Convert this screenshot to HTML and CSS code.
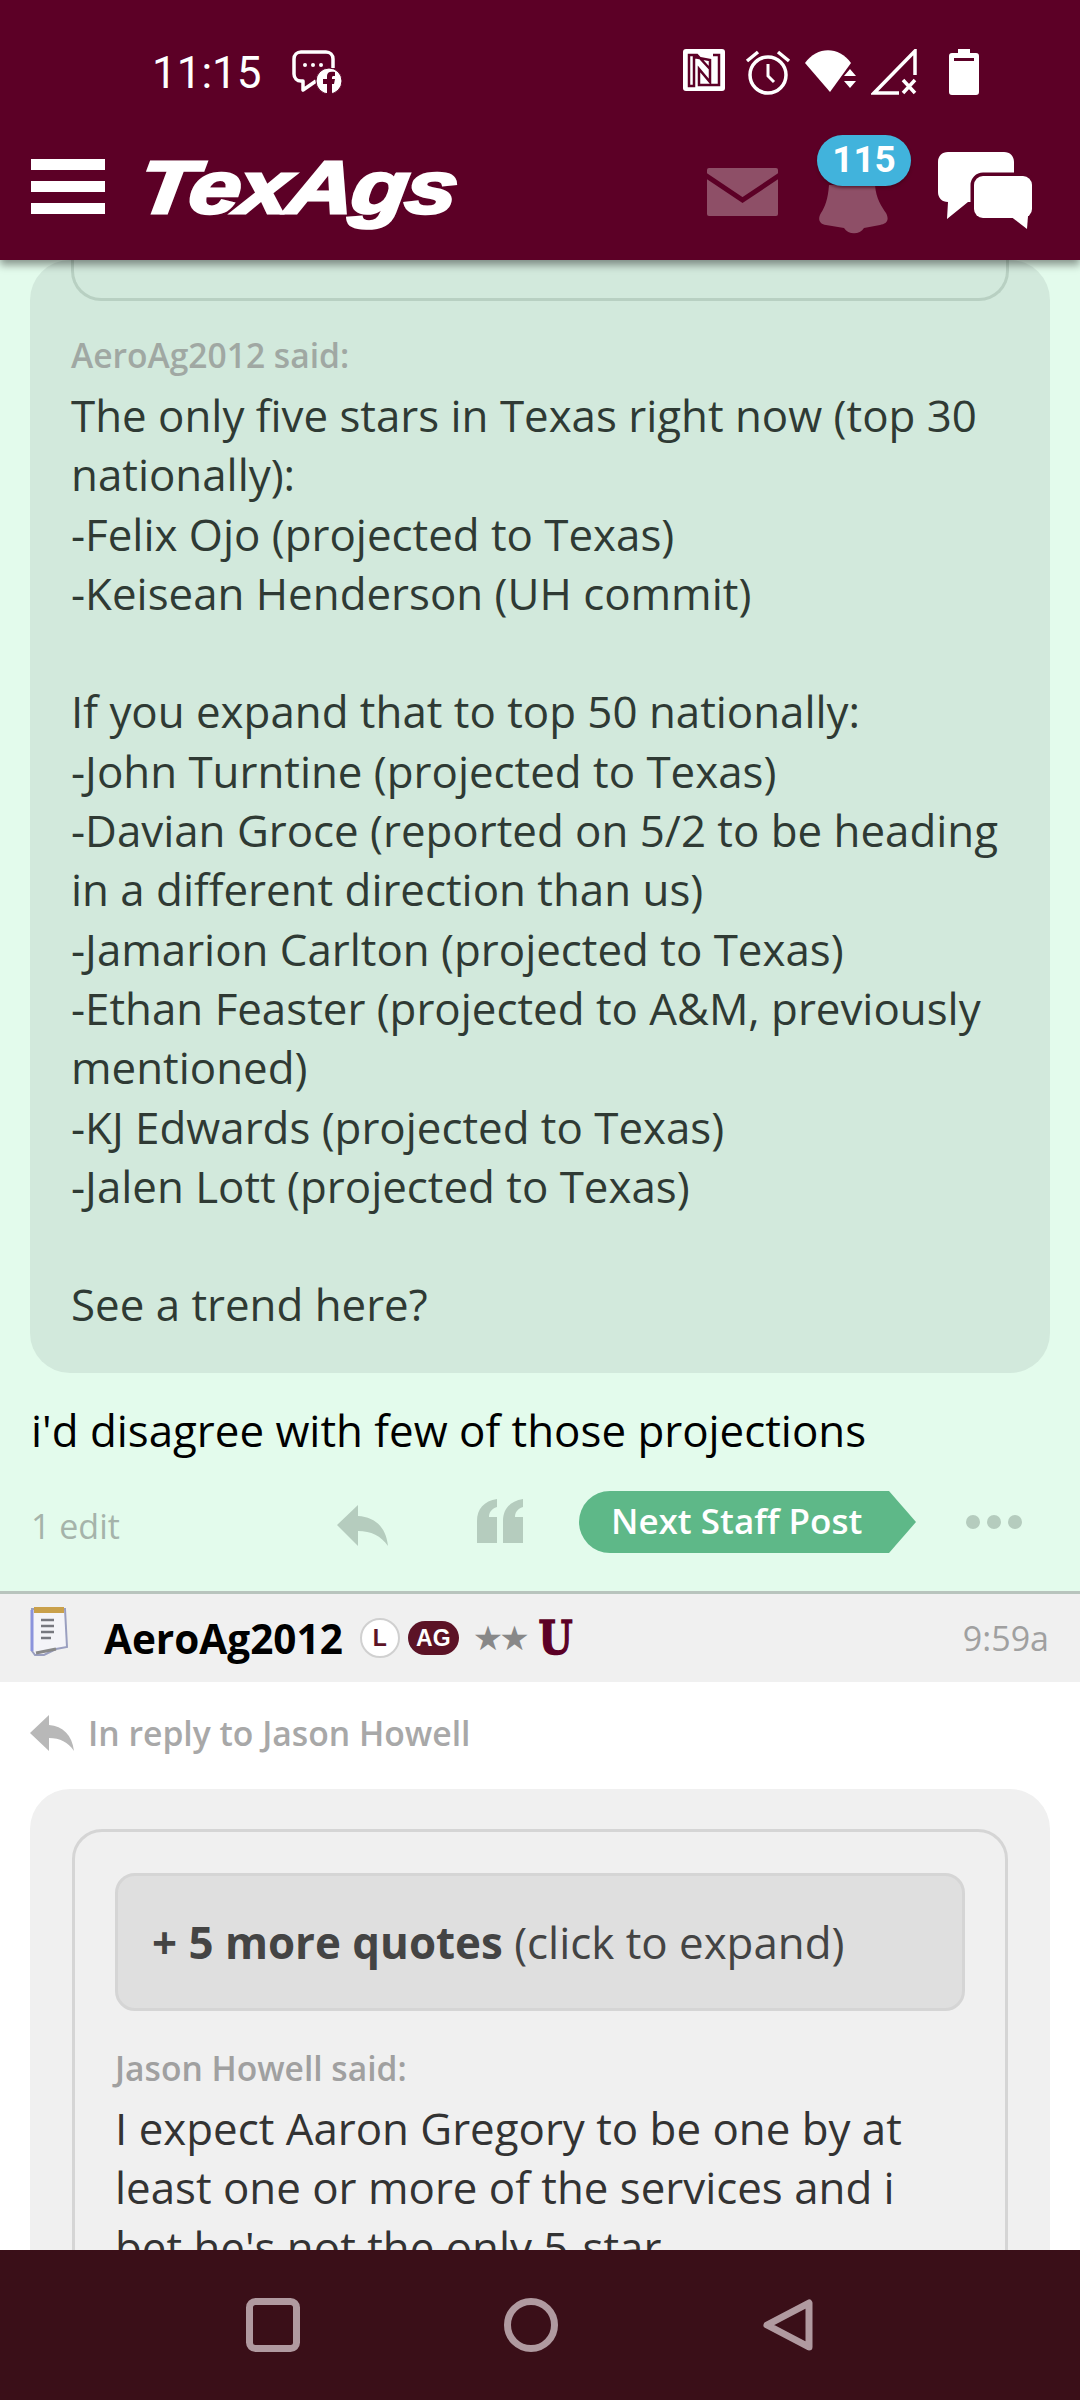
FILE: index.html
```html
<!DOCTYPE html>
<html lang="en">
<head>
  <meta charset="UTF-8">
  <meta name="viewport" content="width=device-width, initial-scale=1.0">
  <title>TexAgs</title>
  <link rel="stylesheet" href="styles.css">
</head>
<body>
  <div class="screen">
    <header class="topbar">
      <div class="status">
        <span class="clock">11:15</span>
        <svg class="msg-icon" viewBox="0 0 50 44" width="50" height="44">
          <path d="M24 31L11 40V31H9C5 31 2 28 2 24V9C2 5 5 2 9 2H34C38 2 41 5 41 9V18" fill="none" stroke="#fff" stroke-width="3.5" stroke-linejoin="round"/>
          <circle cx="13" cy="15" r="2" fill="#fff"/><circle cx="21" cy="15" r="2" fill="#fff"/><circle cx="29" cy="15" r="2" fill="#fff"/>
          <circle cx="37" cy="31" r="13" fill="#fff" stroke="#5c0026" stroke-width="1"/>
          <path d="M35 44V34H31V29H35V26C35 22 38 21 43 22V26C40 26 40 26 40 29H43L42 34H40V44Z" fill="#5c0026"/>
        </svg>
        <div class="status-right">
          <svg viewBox="0 0 42 42" width="42" height="42">
            <rect width="42" height="42" rx="3" fill="#fff"/>
            <path d="M30 6H36V36H16V20L27 33V11L11 8V37H6V6H14L27 20" fill="none" stroke="#5c0026" stroke-width="2.500"/>
          </svg>
          <svg class="alarm" viewBox="0 0 46 46" width="46" height="46">
            <circle cx="23" cy="26" r="18" fill="none" stroke="#fff" stroke-width="3.5"/>
            <path d="M23 15V27L29 33" fill="none" stroke="#fff" stroke-width="3"/>
            <path d="M2 12L13 3M44 12L33 3" stroke="#fff" stroke-width="3.5"/>
          </svg>
          <svg viewBox="0 0 52 44" width="52" height="44">
            <path d="M0 14C12 -3 34 -3 46 14L25 43Z" fill="#fff"/>
            <path d="M39 27L45 20L51 27ZM39 32L51 32L45 39Z" fill="#fff"/>
          </svg>
          <svg viewBox="0 0 46 46" width="46" height="46">
            <path d="M44 26V2L3 44H28" fill="none" stroke="#fff" stroke-width="3.5"/>
            <path d="M32 31L44 44M44 31L32 44" stroke="#fff" stroke-width="3.5"/>
          </svg>
          <svg class="batt" viewBox="0 0 30 46" width="30" height="46">
            <path d="M9 0H21V4H27C29 4 30 5 30 7V43C30 45 29 46 27 46H3C1 46 0 45 0 43V7C0 5 1 4 3 4H9Z" fill="#fff"/>
            <rect x="5" y="9" width="20" height="3" fill="#5c0026"/>
          </svg>
        </div>
      </div>
      <div class="appbar">
        <div class="burger"><i></i><i></i><i></i></div>
        <div class="logo">TexAgs</div>
        <div class="appbar-right">
          <svg class="mail" viewBox="0 0 71 48" width="71" height="48">
            <rect width="71" height="48" rx="2" fill="#8e4f67"/>
            <path d="M-2 7L35.500 32L73 7" fill="none" stroke="#5c0026" stroke-width="5"/>
          </svg>
          <div class="bell">
            <svg viewBox="0 0 71 50" width="71" height="50">
              <path d="M11 0H57C58 14 64 22 68 28C72 36 68 39 62 40L46 43C42 50 30 50 26 43L8 40C2 39 -1 35 3 28C7 22 10 14 11 0Z" fill="#8e4f67"/>
            </svg>
            <span class="badge">115</span>
          </div>
          <svg class="chat" viewBox="0 0 95 78" width="95" height="78">
            <path d="M10 0H66C72 0 76 4 76 10V40C76 46 72 50 66 50H30L9 67L10 50C4 50 0 46 0 40V10C0 4 4 0 10 0Z" fill="#fff"/>
            <rect x="36" y="24" width="58" height="42" rx="9" fill="#fff" stroke="#5c0026" stroke-width="7" paint-order="stroke"/>
            <path d="M72 64H90L89 77Z" fill="#fff"/>
          </svg>
        </div>
      </div>
    </header>

    <main class="content">
      <section class="post post-staff">
        <div class="quote quote-green">
          <div class="quote-inner"></div>
          <div class="said">AeroAg2012 said:</div>
          <p>The only five stars in Texas right now (top 30 nationally):<br>
          -Felix Ojo (projected to Texas)<br>
          -Keisean Henderson (UH commit)<br>
          <br>
          If you expand that to top 50 nationally:<br>
          -John Turntine (projected to Texas)<br>
          -Davian Groce (reported on 5/2 to be heading in a different direction than us)<br>
          -Jamarion Carlton (projected to Texas)<br>
          -Ethan Feaster (projected to A&amp;M, previously mentioned)<br>
          -KJ Edwards (projected to Texas)<br>
          -Jalen Lott (projected to Texas)<br>
          <br>
          See a trend here?</p>
        </div>
        <div class="post-text">i'd disagree with few of those projections</div>
        <div class="actions">
          <span class="edits">1 edit</span>
          <svg class="act-reply" viewBox="0 0 51 41" width="51" height="41">
            <path d="M21 0V11C38 12 49 22 51 41C44 31 34 26 21 26V41L0 20Z" fill="#b5ccbe"/>
          </svg>
          <svg class="act-quote" viewBox="0 0 46 44" width="46" height="44">
            <path d="M0 44V22C0 10 7 2 20 0V8C14 10 12 14 12 18H20V44ZM26 44V22C26 10 33 2 46 0V8C40 10 38 14 38 18H46V44Z" fill="#b5ccbe"/>
          </svg>
          <span class="next-staff">Next Staff Post</span>
          <span class="dots"><i></i><i></i><i></i></span>
        </div>
      </section>

      <section class="post">
        <div class="post-head">
          <svg class="notepad" viewBox="0 0 38 53" width="38" height="53">
            <path d="M2 4H35L37 42L26 44L14 50H5L2 46Z" fill="#f4f4f8" stroke="#9a9fc0" stroke-width="2"/>
            <path d="M2 5V46" stroke="#8b93dc" stroke-width="3"/>
            <path d="M4 2H34V8H4Z" fill="#c9a04a"/>
            <path d="M11 15H24M11 21H24M11 27H24M11 33H21" stroke="#77787f" stroke-width="2.500"/>
            <path d="M6 48L26 44" stroke="#888" stroke-width="3"/>
          </svg>
          <span class="name">AeroAg2012</span>
          <span class="tag-l">L</span>
          <span class="tag-ag">AG</span>
          <span class="stars">★★</span>
          <span class="tag-u">U</span>
          <span class="time">9:59a</span>
        </div>
        <div class="reply-to">
          <svg viewBox="0 0 44 36" width="44" height="36">
            <path d="M19 0V10C33 11 42 20 44 36C38 27 30 23 19 23V36L0 18Z" fill="#b8b8b8"/>
          </svg>
          <span>In reply to Jason Howell</span>
        </div>
        <div class="quote quote-grey">
          <div class="quote-box">
            <div class="more-quotes"><b>+ 5 more quotes</b> (click to expand)</div>
            <div class="said">Jason Howell said:</div>
            <p>I expect Aaron Gregory to be one by at least one or more of the services and i bet he's not the only 5-star</p>
          </div>
        </div>
      </section>
    </main>

    <nav class="navbar">
      <svg viewBox="0 0 54 54" width="54" height="54">
        <rect x="3.500" y="3.500" width="47" height="47" rx="6" fill="none" stroke="#b09aa0" stroke-width="7"/>
      </svg>
      <svg viewBox="0 0 54 54" width="54" height="54">
        <circle cx="27" cy="27" r="23.500" fill="none" stroke="#b09aa0" stroke-width="7"/>
      </svg>
      <svg viewBox="0 0 54 54" width="54" height="54">
        <path d="M47 5V49L5 27Z" fill="none" stroke="#b09aa0" stroke-width="7" stroke-linejoin="round"/>
      </svg>
    </nav>
  </div>
</body>
</html>
```

FILE: styles.css
```css
* { box-sizing: border-box; }
body { margin: 0; font-family: "Open Sans", sans-serif; background: #fff; }
p { margin: 0; }
.screen { width: 1080px; height: 2400px; display: flex; flex-direction: column; overflow: hidden; }

.topbar { flex: none; height: 260px; background: #5c0026; position: relative; z-index: 2; box-shadow: 0 5px 8px rgba(0,0,0,0.4); }
.status { height: 146px; padding: 49px 101px 0 152px; display: flex; align-items: flex-start; font-family: Roboto, sans-serif; color: #fff; }
.clock { font-size: 44px; line-height: 48px; width: 140px; }
.msg-icon { margin-top: 1px; }
.status-right { margin-left: auto; display: flex; gap: 14px; align-items: flex-start; }
.alarm { margin-left: 6px; }
.batt { margin-left: 18px; }

.appbar { display: flex; align-items: flex-start; padding-left: 31px; }
.burger { width: 74px; margin-top: 13px; display: flex; flex-direction: column; gap: 11px; }
.burger i { display: block; height: 11px; background: #fff; }
.logo { margin-left: 40px; font-family: "Liberation Sans", sans-serif; font-weight: bold; font-style: italic; font-size: 74px; line-height: 84px; color: #fff; -webkit-text-stroke: 3px #fff; letter-spacing: -2px; transform: scaleX(1.25) skewX(-6deg); transform-origin: left top; }
.appbar-right { margin-left: auto; display: flex; align-items: flex-start; padding-right: 47px; }
.mail { margin-top: 22px; }
.bell { position: relative; width: 71px; height: 50px; margin: 39px 49px 0 40px; }
.badge { position: absolute; left: -1px; top: -50px; width: 94px; height: 51px; border-radius: 26px; background: #41b3dc; box-shadow: 0 2px 3px rgba(60,0,20,0.6); color: #fff; font: bold 37px/50px Roboto, sans-serif; text-align: center; }
.chat { margin-top: 6px; }

.content { flex: 1; overflow: hidden; background: #fff; }
.post-staff { background: #e3fbec; height: 1334px; border-bottom: 3px solid #b8c4bd; }
.quote { margin: 0 30px; border-radius: 40px; font-size: 43.850px; line-height: 59.300px; color: #333; }
.quote-green { background: #d2e9dc; height: 1113px; padding: 0 41px; color: #2f3a34; }
.quote-inner { height: 41px; margin-bottom: 30px; border: 3px solid #b8d0c2; border-top: 0; border-radius: 0 0 30px 30px; }
.said { font-size: 33.600px; line-height: 48px; font-weight: 600; color: #a0a8a3; margin-bottom: 7px; }
.post-text { margin: 27px 31px 0; font-size: 43.850px; line-height: 60px; color: #000; }
.actions { display: flex; align-items: center; margin: 31px 0 0 31px; height: 62px; position: relative; }
.edits { font-size: 34px; color: #a5b3aa; width: 306px; padding-top: 8px; }
.act-reply { margin-top: 6px; }
.act-quote { margin: 0 0 2px 89px; }
.next-staff { margin-left: 56px; width: 337px; height: 62px; padding-left: 32px; background: #5eb888; color: #fff; font-size: 35px; font-weight: 600; line-height: 60px; clip-path: polygon(0 0, 310px 0, 337px 31px, 310px 62px, 0 62px); border-radius: 31px 0 0 31px; }
.dots { margin-left: 50px; display: flex; gap: 7px; }
.dots i { width: 14px; height: 14px; border-radius: 50%; background: #b5ccbe; }

.post-head { height: 88px; background: #f0f0f0; display: flex; align-items: center; padding: 0 31px 0 30px; }
.notepad { margin-bottom: 14px; }
.name { margin-left: 36px; font-size: 40.500px; font-weight: 700; color: #000; }
.tag-l { margin-left: 17px; width: 40px; height: 40px; border-radius: 50%; background: #fff; border: 2px solid #d0d0d0; color: #5c1326; font: bold 23px/36px "Liberation Sans", sans-serif; text-align: center; }
.tag-ag { margin-left: 8px; width: 51px; height: 34px; border-radius: 17px; background: #5c1326; color: #fff; font: bold 23px/34px "Liberation Sans", sans-serif; text-align: center; }
.stars { margin-left: 14px; width: 54px; font: 34px/34px "DejaVu Sans", sans-serif; color: #888; letter-spacing: -4px; }
.tag-u { margin-left: 9px; font: bold 46px/36px "DejaVu Serif", serif; color: #5c0026; -webkit-text-stroke: 1.500px #5c0026; width: 34px; text-align: center; transform: scaleX(0.85); }
.time { margin-left: auto; font-size: 34px; color: #a0a0a0; }

.reply-to { height: 102px; display: flex; align-items: center; padding-left: 30px; gap: 14px; color: #a8a8a8; font-size: 33.700px; font-weight: 600; }
.quote-grey { margin-top: 5px; background: #f0f0f0; padding: 40px 42px 0; height: 600px; }
.quote-box { border: 3px solid #d5d5d5; border-radius: 30px; padding: 41px 40px 0; height: 600px; color: #333; }
.more-quotes { height: 138px; background: #dfdfdf; border: 3px solid #d5d5d5; border-radius: 20px; padding-left: 34px; font-size: 43.850px; line-height: 132px; color: #444; }
.quote-box .said { margin-top: 33px; color: #a0a0a0; margin-bottom: 7px; }

.navbar { flex: none; height: 150px; background: #3a0f18; position: relative; z-index: 2; display: flex; gap: 204px; padding: 48px 0 0 246px; align-items: flex-start; }
```
